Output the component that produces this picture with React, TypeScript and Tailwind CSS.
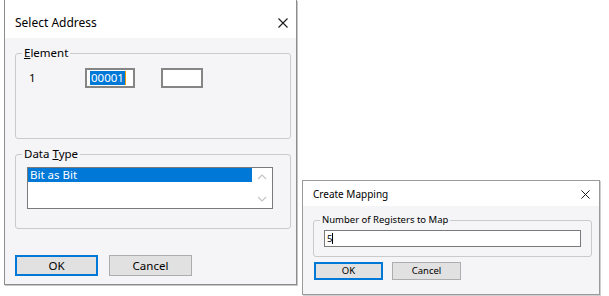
function CloseIcon({ size }: { size: number }) {
  return (
    <svg width={size} height={size} viewBox="0 0 10 10" className="shrink-0">
      <path d="M0.5 0.5 L9.5 9.5 M9.5 0.5 L0.5 9.5" stroke="#1a1a1a" strokeWidth="1.1" fill="none" />
    </svg>
  );
}

function Chevron({ up }: { up?: boolean }) {
  return (
    <svg width="10" height="6" viewBox="0 0 10 6">
      <path
        d={up ? 'M1 5 L5 1 L9 5' : 'M1 1 L5 5 L9 1'}
        stroke="#c4c4c4"
        strokeWidth="1.2"
        fill="none"
      />
    </svg>
  );
}

function SelectAddress() {
  return (
    <div className="ml-[4px] w-[293px] h-[285px] shrink-0 flex flex-col border-x border-b border-[#8d8d8d] shadow-[1px_1px_0_#c6c6c6]">
      {/* title bar */}
      <div className="h-[38px] bg-white flex items-start justify-between pl-[10px] pr-[8px] pt-[15px]">
        <span className="text-[12px] leading-[16px]">Select Address</span>
        <div className="pt-[3px]">
          <CloseIcon size={10} />
        </div>
      </div>

      <div className="flex-1 bg-[#f5f5f7] pt-[7px] text-[11.5px]">
        <fieldset className="ml-[10px] w-[276px] h-[94px] border border-[#cacaca] rounded-[3px]">
          <legend className="ml-[6px] px-[2px] leading-[16px]">
            <span className="underline">E</span>lement
          </legend>
          <div className="flex items-center mt-[7px] pl-[13px]">
            <span className="w-[56px]">1</span>
            <div className="w-[50px] h-[20px] bg-white border-2 border-[#858585] flex items-center pl-[3px]">
              <span className="bg-[#0078d7] text-white leading-[14px] px-[1px]">00001</span>
              <span className="w-[1px] h-[14px] bg-[#f0a000]" />
            </div>
            <div className="ml-[26px] w-[42px] h-[20px] bg-white border-2 border-[#858585]" />
          </div>
        </fieldset>

        <fieldset className="mt-[7px] ml-[10px] w-[276px] h-[83px] border border-[#cacaca] rounded-[3px]">
          <legend className="ml-[6px] px-[2px] leading-[16px]">
            Data <span className="underline">T</span>ype
          </legend>
          <div className="mt-[5px] ml-[11px] w-[246px] h-[42px] bg-white border border-[#7a7a7a] flex">
            <div className="flex-1">
              <div className="h-[14px] bg-[#0078d7] text-white leading-[14px] pl-[2px]">Bit as Bit</div>
            </div>
            <div className="w-[20px] flex flex-col items-center justify-between py-[6px]">
              <Chevron up />
              <Chevron />
            </div>
          </div>
        </fieldset>

        <div className="flex mt-[26px] ml-[10px] gap-[11px]">
          <button className="w-[83px] h-[21px] bg-[#e1e1e1] border-2 border-[#0078d7] leading-none">OK</button>
          <button className="w-[83px] h-[21px] bg-[#e1e1e1] border border-[#adadad] leading-none">Cancel</button>
        </div>
      </div>
    </div>
  );
}

function CreateMapping() {
  return (
    <div className="ml-[5px] mt-[180px] w-[298px] h-[115px] shrink-0 flex flex-col border border-[#9a9a9a] shadow-[1px_1px_0_#cfcfcf]">
      <div className="h-[25px] bg-white flex items-center justify-between pl-[10px] pr-[9px] pt-[1px]">
        <span className="text-[10px] leading-[14px]">Create Mapping</span>
        <CloseIcon size={9} />
      </div>

      <div className="flex-1 bg-[#f5f5f7] pt-[7px] text-[9.5px]">
        <fieldset className="ml-[10px] w-[279px] h-[44px] border border-[#cacaca] rounded-[3px]">
          <legend className="ml-[6px] px-[2px] leading-[14px]">Number of Registers to Map</legend>
          <div className="mt-[3px] ml-[10px] w-[257px] h-[17px] bg-white border border-[#7a7a7a] flex items-center pl-[2px]">
            <span className="leading-[12px]">5</span>
            <span className="w-[1px] h-[11px] bg-black" />
          </div>
        </fieldset>

        <div className="flex mt-[5px] ml-[11px] gap-[9px]">
          <button className="w-[69px] h-[18px] bg-[#e1e1e1] border-2 border-[#0078d7] leading-none">OK</button>
          <button className="w-[69px] h-[18px] bg-[#e1e1e1] border border-[#adadad] leading-none">Cancel</button>
        </div>
      </div>
    </div>
  );
}

export default function App() {
  return (
    <div className="flex items-start w-[609px] h-[296px] overflow-hidden bg-white text-black font-['Noto_Sans',sans-serif]">
      <SelectAddress />
      <CreateMapping />
    </div>
  );
}
